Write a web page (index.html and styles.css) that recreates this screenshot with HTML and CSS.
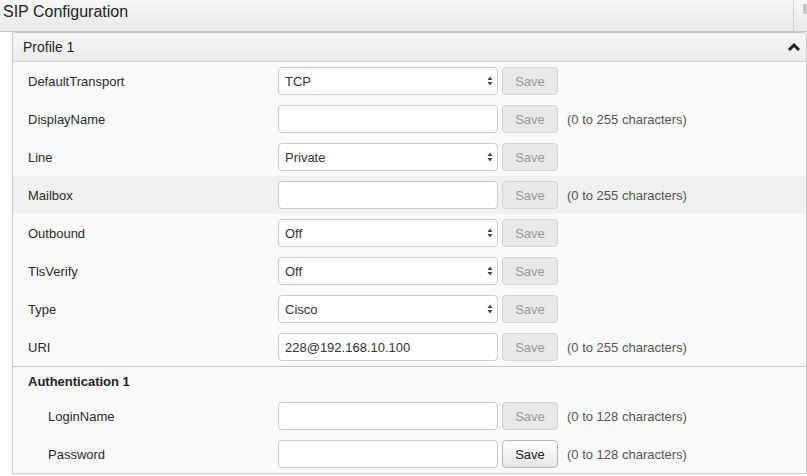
FILE: index.html
```html
<!DOCTYPE html>
<html>
<head>
    <link rel="stylesheet" href="styles.css">
</head>
<body>
    <div class="page-header">
        <span class="page-title">SIP Configuration</span>
        <span class="header-tools"><span class="grip"></span></span>
    </div>

    <div class="panel">
        <div class="panel-heading">
            <span>Profile 1</span>
            <svg class="chevron" width="14" height="10" viewBox="0 0 14 10"><polyline points="2,8 7,3 12,8" fill="none" stroke="#222" stroke-width="3"/></svg>
        </div>

        <div class="panel-body">
            <div class="row">
                <div class="label">DefaultTransport</div>
                <div class="select-wrap">
                    <select><option>TCP</option><option>UDP</option><option>TLS</option></select>
                    <svg class="arrows" width="8" height="12" viewBox="0 0 8 12"><path d="M4 1.5 L6.5 5 L1.5 5 Z M4 10.5 L6.5 7 L1.5 7 Z" fill="#444"/></svg>
                </div>
                <button class="save" disabled>Save</button>
            </div>
            <div class="row">
                <div class="label">DisplayName</div>
                <input type="text" class="field">
                <button class="save" disabled>Save</button>
                <span class="hint">(0 to 255 characters)</span>
            </div>
            <div class="row">
                <div class="label">Line</div>
                <div class="select-wrap">
                    <select><option>Private</option><option>Shared</option></select>
                    <svg class="arrows" width="8" height="12" viewBox="0 0 8 12"><path d="M4 1.5 L6.5 5 L1.5 5 Z M4 10.5 L6.5 7 L1.5 7 Z" fill="#444"/></svg>
                </div>
                <button class="save" disabled>Save</button>
            </div>
            <div class="row hovered">
                <div class="label">Mailbox</div>
                <input type="text" class="field">
                <button class="save" disabled>Save</button>
                <span class="hint">(0 to 255 characters)</span>
            </div>
            <div class="row">
                <div class="label">Outbound</div>
                <div class="select-wrap">
                    <select><option>Off</option><option>On</option></select>
                    <svg class="arrows" width="8" height="12" viewBox="0 0 8 12"><path d="M4 1.5 L6.5 5 L1.5 5 Z M4 10.5 L6.5 7 L1.5 7 Z" fill="#444"/></svg>
                </div>
                <button class="save" disabled>Save</button>
            </div>
            <div class="row">
                <div class="label">TlsVerify</div>
                <div class="select-wrap">
                    <select><option>Off</option><option>On</option></select>
                    <svg class="arrows" width="8" height="12" viewBox="0 0 8 12"><path d="M4 1.5 L6.5 5 L1.5 5 Z M4 10.5 L6.5 7 L1.5 7 Z" fill="#444"/></svg>
                </div>
                <button class="save" disabled>Save</button>
            </div>
            <div class="row">
                <div class="label">Type</div>
                <div class="select-wrap">
                    <select><option>Cisco</option><option>Standard</option></select>
                    <svg class="arrows" width="8" height="12" viewBox="0 0 8 12"><path d="M4 1.5 L6.5 5 L1.5 5 Z M4 10.5 L6.5 7 L1.5 7 Z" fill="#444"/></svg>
                </div>
                <button class="save" disabled>Save</button>
            </div>
            <div class="row">
                <div class="label">URI</div>
                <input type="text" class="field" value="228@192.168.10.100">
                <button class="save" disabled>Save</button>
                <span class="hint">(0 to 255 characters)</span>
            </div>
        </div>

        <div class="subsection">
            <div class="sub-title">Authentication 1</div>
            <div class="row sub-row">
                <div class="label">LoginName</div>
                <input type="text" class="field">
                <button class="save" disabled>Save</button>
                <span class="hint">(0 to 128 characters)</span>
            </div>
            <div class="row sub-row">
                <div class="label">Password</div>
                <input type="password" class="field">
                <button class="save active">Save</button>
                <span class="hint">(0 to 128 characters)</span>
            </div>
        </div>
        <div class="subsection"></div>
    </div>
</body>
</html>
```

FILE: styles.css
```css
body {
    margin: 0;
    font-family: "Liberation Sans", Arial, sans-serif;
    font-size: 13px;
    color: #333;
    background: white;
}
.page-header {
    height: 31px;
    display: flex;
    justify-content: space-between;
    border-bottom: 1px solid #c8c8c8;
    background: linear-gradient(#f7f7f7, #e9e9e9);
}
.page-title {
    font-size: 16px;
    line-height: 24px;
    padding-left: 3px;
    color: #222;
}
.header-tools {
    width: 13px;
    border-left: 1px solid #d6d6d6;
    position: relative;
}
.grip {
    position: absolute;
    right: 0;
    top: 4px;
    width: 4px;
    height: 10px;
    border-radius: 2px 0 0 2px;
    background: #c4c4c4;
}
.panel {
    margin-left: 12px;
    border: 1px solid #c8c8c8;
    border-bottom: none;
    border-radius: 4px 4px 0 0;
    background: #fafafa;
}
.panel-heading {
    height: 28px;
    display: flex;
    align-items: center;
    justify-content: space-between;
    padding: 0 5px 0 10px;
    font-size: 14px;
    color: #222;
    border-bottom: 1px solid #d0d0d0;
    border-radius: 4px 4px 0 0;
    background: linear-gradient(#f7f7f7, #ebebeb);
}
.row {
    height: 38px;
    display: flex;
    align-items: center;
    padding-left: 15px;
}
.row.hovered {
    background: #f1f1f1;
}
.label {
    width: 250px;
    flex-shrink: 0;
    color: #2a2a2a;
}
.sub-row .label {
    width: 230px;
    padding-left: 20px;
}
.field, .select-wrap select {
    box-sizing: border-box;
    width: 220px;
    height: 28px;
    border: 1px solid #ccc;
    border-radius: 4px;
    background: white;
    font-family: inherit;
    font-size: 13px;
    color: #333;
    padding: 0 6px;
    margin: 0;
}
.select-wrap {
    position: relative;
    width: 220px;
    height: 28px;
}
.select-wrap select {
    appearance: none;
    -webkit-appearance: none;
}
.arrows {
    position: absolute;
    right: 4px;
    top: 8px;
}
.save {
    box-sizing: border-box;
    width: 56px;
    height: 28px;
    margin-left: 4px;
    border: 1px solid #d4d4d4;
    border-radius: 4px;
    background: #e8e8e8;
    color: #999;
    font-family: inherit;
    font-size: 13px;
    padding: 0;
}
.save.active {
    border-color: #b8b8b8;
    background: linear-gradient(#ffffff, #e6e6e6);
    color: #222;
}
.hint {
    margin-left: 9px;
    color: #555;
}
.subsection {
    border-top: 1px solid #c8c8c8;
}
.sub-title {
    height: 30px;
    line-height: 30px;
    padding-left: 15px;
    font-weight: bold;
    color: #222;
}
```
